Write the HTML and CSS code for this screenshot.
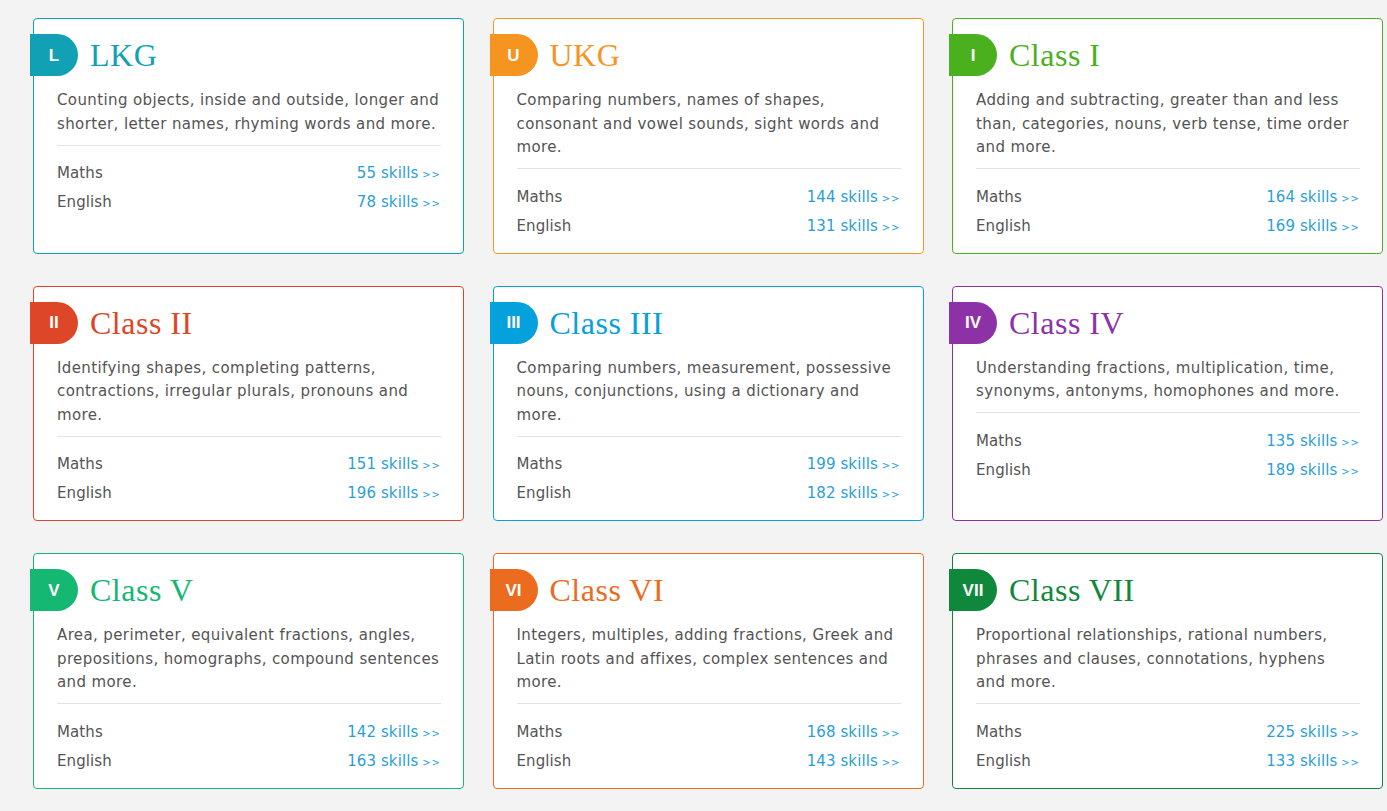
FILE: index.html
```html
<!DOCTYPE html>
<html lang="en">
<head>
<meta charset="utf-8">
<title>Classes</title>
<link rel="stylesheet" href="styles.css">
</head>
<body>
<main class="grid">
  <section class="card c-lkg">
    <header class="head"><span class="badge">L</span><h2 class="title">LKG</h2></header>
    <p class="desc">Counting objects, inside and outside, longer and shorter, letter names, rhyming words and more.</p>
    <ul class="subjects">
      <li><span class="subj">Maths</span><a class="skills" href="#">55 skills <span class="arr">&gt;&gt;</span></a></li>
      <li><span class="subj">English</span><a class="skills" href="#">78 skills <span class="arr">&gt;&gt;</span></a></li>
    </ul>
  </section>
  <section class="card c-ukg">
    <header class="head"><span class="badge">U</span><h2 class="title">UKG</h2></header>
    <p class="desc">Comparing numbers, names of shapes, consonant and vowel sounds, sight words and more.</p>
    <ul class="subjects">
      <li><span class="subj">Maths</span><a class="skills" href="#">144 skills <span class="arr">&gt;&gt;</span></a></li>
      <li><span class="subj">English</span><a class="skills" href="#">131 skills <span class="arr">&gt;&gt;</span></a></li>
    </ul>
  </section>
  <section class="card c-1">
    <header class="head"><span class="badge">I</span><h2 class="title">Class I</h2></header>
    <p class="desc">Adding and subtracting, greater than and less than, categories, nouns, verb tense, time order and more.</p>
    <ul class="subjects">
      <li><span class="subj">Maths</span><a class="skills" href="#">164 skills <span class="arr">&gt;&gt;</span></a></li>
      <li><span class="subj">English</span><a class="skills" href="#">169 skills <span class="arr">&gt;&gt;</span></a></li>
    </ul>
  </section>
  <section class="card c-2">
    <header class="head"><span class="badge">II</span><h2 class="title">Class II</h2></header>
    <p class="desc">Identifying shapes, completing patterns, contractions, irregular plurals, pronouns and more.</p>
    <ul class="subjects">
      <li><span class="subj">Maths</span><a class="skills" href="#">151 skills <span class="arr">&gt;&gt;</span></a></li>
      <li><span class="subj">English</span><a class="skills" href="#">196 skills <span class="arr">&gt;&gt;</span></a></li>
    </ul>
  </section>
  <section class="card c-3">
    <header class="head"><span class="badge">III</span><h2 class="title">Class III</h2></header>
    <p class="desc">Comparing numbers, measurement, possessive nouns, conjunctions, using a dictionary and more.</p>
    <ul class="subjects">
      <li><span class="subj">Maths</span><a class="skills" href="#">199 skills <span class="arr">&gt;&gt;</span></a></li>
      <li><span class="subj">English</span><a class="skills" href="#">182 skills <span class="arr">&gt;&gt;</span></a></li>
    </ul>
  </section>
  <section class="card c-4">
    <header class="head"><span class="badge">IV</span><h2 class="title">Class IV</h2></header>
    <p class="desc">Understanding fractions, multiplication, time, synonyms, antonyms, homophones and more.</p>
    <ul class="subjects">
      <li><span class="subj">Maths</span><a class="skills" href="#">135 skills <span class="arr">&gt;&gt;</span></a></li>
      <li><span class="subj">English</span><a class="skills" href="#">189 skills <span class="arr">&gt;&gt;</span></a></li>
    </ul>
  </section>
  <section class="card c-5">
    <header class="head"><span class="badge">V</span><h2 class="title">Class V</h2></header>
    <p class="desc">Area, perimeter, equivalent fractions, angles, prepositions, homographs, compound sentences and more.</p>
    <ul class="subjects">
      <li><span class="subj">Maths</span><a class="skills" href="#">142 skills <span class="arr">&gt;&gt;</span></a></li>
      <li><span class="subj">English</span><a class="skills" href="#">163 skills <span class="arr">&gt;&gt;</span></a></li>
    </ul>
  </section>
  <section class="card c-6">
    <header class="head"><span class="badge">VI</span><h2 class="title">Class VI</h2></header>
    <p class="desc">Integers, multiples, adding fractions, Greek and Latin roots and affixes, complex sentences and more.</p>
    <ul class="subjects">
      <li><span class="subj">Maths</span><a class="skills" href="#">168 skills <span class="arr">&gt;&gt;</span></a></li>
      <li><span class="subj">English</span><a class="skills" href="#">143 skills <span class="arr">&gt;&gt;</span></a></li>
    </ul>
  </section>
  <section class="card c-7">
    <header class="head"><span class="badge">VII</span><h2 class="title">Class VII</h2></header>
    <p class="desc">Proportional relationships, rational numbers, phrases and clauses, connotations, hyphens and more.</p>
    <ul class="subjects">
      <li><span class="subj">Maths</span><a class="skills" href="#">225 skills <span class="arr">&gt;&gt;</span></a></li>
      <li><span class="subj">English</span><a class="skills" href="#">133 skills <span class="arr">&gt;&gt;</span></a></li>
    </ul>
  </section>
</main>
</body>
</html>
```
FILE: styles.css
```css
html, body {
  margin: 0;
  padding: 0;
  background: #f3f3f3;
}
body {
  font-family: "DejaVu Sans", Verdana, sans-serif;
  color: #545454;
}
.grid {
  display: grid;
  grid-template-columns: repeat(3, 431px);
  column-gap: 28.5px;
  row-gap: 32px;
  padding: 18px 0 0 33px;
}
.card {
  --c: #12a0b5;
  background: #fff;
  border: 1px solid var(--c);
  border-radius: 4px;
  padding: 15px 21px 12px 23px;
  display: flex;
  flex-direction: column;
}
.c-lkg { --c: #12a0b5; }
.c-ukg { --c: #f5941e; }
.c-1 { --c: #4bb01e; }
.c-2 { --c: #dd4626; }
.c-3 { --c: #04a1dd; }
.c-4 { --c: #8d32a6; }
.c-5 { --c: #14b873; }
.c-6 { --c: #eb6b1f; }
.c-7 { --c: #0f883c; }

.head {
  display: flex;
  align-items: center;
  height: 42px;
  margin-left: -27px;
}
.badge {
  width: 48px;
  height: 42px;
  box-sizing: border-box;
  background: var(--c);
  border-radius: 0 21px 21px 0;
  color: #fff;
  font-family: "Liberation Sans", Arial, sans-serif;
  font-weight: bold;
  font-size: 17px;
  display: flex;
  align-items: center;
  justify-content: center;
  padding-top: 1px;
}
.title {
  margin: 0 0 0 12px;
  font-family: "Liberation Serif", "Times New Roman", serif;
  font-weight: normal;
  font-size: 32px;
  letter-spacing: 0.5px;
  color: var(--c);
  line-height: 42px;
}
.desc {
  margin: 13px 1px 0 0;
  padding-right: 1.5px;
  font-size: 15px;
  letter-spacing: 0.38px;
  line-height: 23.5px;
  padding-bottom: 8.5px;
  border-bottom: 1px solid #e3e3e3;
}
.subjects {
  list-style: none;
  margin: 13.5px 1px 0 0;
  padding: 0;
}
.subjects li {
  display: flex;
  justify-content: space-between;
  align-items: baseline;
  height: 29px;
  line-height: 29px;
  font-size: 15px;
  letter-spacing: 0.1px;
}
.skills {
  color: #2b9fd5;
  text-decoration: none;
}
.arr {
  font-size: 10px;
  letter-spacing: 1px;
  margin-left: -1px;
}
```
